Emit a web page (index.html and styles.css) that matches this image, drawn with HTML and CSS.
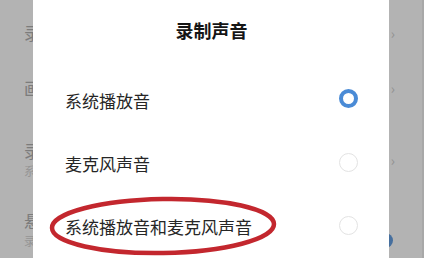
FILE: index.html
```html
<!DOCTYPE html>
<html lang="zh-CN">
<head>
  <meta charset="UTF-8" />
  <meta name="viewport" content="width=device-width, initial-scale=1.0" />
  <title>录制声音</title>
  <link rel="stylesheet" href="styles.css">
</head>
<body>
  <div class="page">
    <div class="setting">
      <span class="setting-name">录</span>
      <span class="arrow">›</span>
    </div>
    <div class="setting">
      <span class="setting-name">画</span>
      <span class="arrow">›</span>
    </div>
    <div class="setting">
      <span class="setting-name">录</span>
      <span class="setting-sub">系</span>
      <span class="arrow">›</span>
    </div>
    <div class="setting">
      <span class="setting-name">悬</span>
      <span class="setting-sub">录</span>
      <span class="toggle"></span>
    </div>
  </div>

  <div class="dialog">
    <h1 class="dialog-title">录制声音</h1>
    <div class="option">
      <span>系统播放音</span>
      <span class="radio checked"></span>
    </div>
    <div class="option">
      <span>麦克风声音</span>
      <span class="radio"></span>
    </div>
    <div class="option">
      <span>系统播放音和麦克风声音</span>
      <span class="radio"></span>
    </div>

    <!-- red hand-drawn circle round the last option -->
    <svg class="mark" width="240" height="64" viewBox="0 0 240 64">
      <ellipse cx="119" cy="32" rx="111" ry="27" fill="none" stroke="#c3272e" stroke-width="4.5" transform="rotate(-1 119 32)" />
    </svg>
  </div>
</body>
</html>
```

FILE: styles.css
```css
* {
  margin: 0;
  padding: 0;
  box-sizing: border-box;
}

body {
  width: 424px;
  height: 258px;
  overflow: hidden;
  background: #b3b3b3;
  font-family: "Noto Sans CJK SC", "Noto Sans", sans-serif;
  position: relative;
}

/* settings page, dimmed behind the dialog */
.page {
  height: 258px;
  border-right: 2px solid #a8a8a8;
  padding: 10px 30px 0 24px;
  color: #7c7c7c;
}

.setting {
  position: relative;
  height: 60px;
  display: flex;
  flex-direction: column;
  justify-content: center;
}

.setting:nth-child(1) { height: 46px; }
.setting:nth-child(2) { height: 64px; }
.setting:nth-child(3) { height: 80px; }

.setting-name {
  font-size: 17px;
  line-height: 22px;
}

.setting-sub {
  font-size: 12px;
  line-height: 18px;
  color: #959595;
}

.arrow {
  position: absolute;
  right: -3px;
  top: 50%;
  transform: translateY(-50%);
  font-size: 14px;
  color: #909090;
}

.toggle {
  position: absolute;
  right: -1px;
  top: 33px;
  width: 30px;
  height: 15px;
  border-radius: 8px;
  background: #466f9e;
}

/* dialog */
.dialog {
  position: absolute;
  top: 0;
  left: 33px;
  width: 356px;
  height: 258px;
  background: #fff;
  padding: 18px 31px 0 32px;
}

.dialog-title {
  font-size: 18px;
  font-weight: 700;
  line-height: 24px;
  text-align: center;
  color: #151515;
  margin-bottom: 27px;
}

.option {
  height: 63px;
  display: flex;
  align-items: center;
  justify-content: space-between;
  font-size: 17px;
  color: #262626;
}

.radio {
  width: 19px;
  height: 19px;
  border-radius: 50%;
  border: 1.5px solid #e3e3e3;
  margin-top: -3px;
}

.radio.checked {
  border: 4.5px solid #4a8bd6;
  margin-top: -4px;
}

.mark {
  position: absolute;
  left: 11px;
  top: 194px;
}
```
